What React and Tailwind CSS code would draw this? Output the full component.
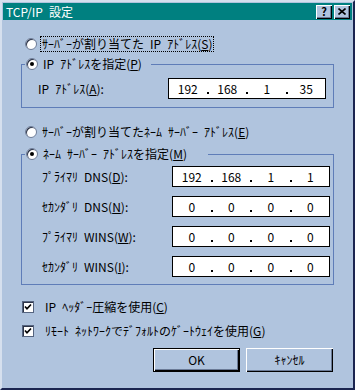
import { Fragment } from "react";

// MS UI Gothic has half-width (6px) spaces; Noto's are narrower, so use en spaces
const S = "\u2002";

function Radio({ checked }) {
  return (
    <span className="flex h-3 w-3 shrink-0 items-center justify-center rounded-full border border-[#6d7c98] bg-white shadow-[inset_1px_1px_0_#2c3448]">
      {checked && <span className="h-1 w-1 rounded-full bg-black" />}
    </span>
  );
}

function Checkbox() {
  return (
    <span className="flex h-[12px] w-[12px] shrink-0 items-center justify-center border border-[#55647f] bg-white shadow-[inset_1px_1px_0_#2c3448]">
      <svg width="8" height="8" viewBox="0 0 8 8">
        <polyline points="1,3.5 3,5.8 7,1.5" fill="none" stroke="black" strokeWidth="1.7" />
      </svg>
    </span>
  );
}

function IpField({ parts }) {
  return (
    <div className="flex h-[21px] w-[158px] items-center border border-black bg-white text-[12px] leading-none">
      {parts.map((p, i) => (
        <Fragment key={i}>
          <span className="flex-1 text-center">{p}</span>
          {i < 3 && <span className="mt-[8px] h-[2px] w-[2px] bg-black" />}
        </Fragment>
      ))}
    </div>
  );
}

function Row({ label, parts, className }) {
  return (
    <div className={"flex h-[21px] items-center " + className}>
      <span className="w-[130px] whitespace-nowrap">{label}</span>
      <IpField parts={parts} />
    </div>
  );
}

function TitleButton({ children }) {
  return (
    <span className="flex h-[14px] w-[16px] items-center justify-center bg-[#b0c4de] shadow-[inset_1px_1px_0_#fff,inset_-1px_-1px_0_#000,inset_-2px_-2px_0_#6a7a96]">
      {children}
    </span>
  );
}

export default function App() {
  return (
    <div className="flex h-[390px] w-[355px] flex-col border-t-2 border-l-2 border-r-2 border-b-2 border-t-[#d6e0ee] border-l-[#d6e0ee] border-r-[#1b2550] border-b-[#1b2550] bg-[#b0c4de] font-['Noto_Sans_CJK_JP',sans-serif] text-[12px] leading-4 text-black">
      {/* title bar */}
      <div className="mx-[1px] mt-[1px] flex h-[17px] items-center justify-between bg-[#008080] pl-[3px] pr-[2px] text-white">
        <span className="text-[12px]">TCP/IP{S}設定</span>
        <div className="flex gap-[2px]">
          <TitleButton>
            <span className="text-[11px] font-bold leading-none text-black">?</span>
          </TitleButton>
          <TitleButton>
            <svg width="8" height="7" viewBox="0 0 8 7">
              <path d="M0.5 0.5 L7.5 6.5 M7.5 0.5 L0.5 6.5" stroke="black" strokeWidth="1.6" />
            </svg>
          </TitleButton>
        </div>
      </div>

      {/* radio 1 */}
      <div className="mt-[16px] flex h-4 items-center pl-[23px]">
        <Radio />
        <span className="ml-[3px] whitespace-nowrap border border-dotted border-black px-[1px] leading-[14px]">
          ｻｰﾊﾞｰが割り当てた{S}IP{S}ｱﾄﾞﾚｽ(<u>S</u>)
        </span>
      </div>

      {/* group 1 */}
      <fieldset className="ml-[19px] mt-[4px] w-[313px] border border-[#5f7db8] pb-[8px]">
        <legend className="ml-[3px] flex h-4 w-[126px] items-center pl-[1px]">
          <Radio checked />
          <span className="ml-[5px] whitespace-nowrap">IP{S}ｱﾄﾞﾚｽを指定(<u>P</u>)</span>
        </legend>
        <Row
          className="mt-[6px] pl-[16px]"
          label={<>IP{S}ｱﾄﾞﾚｽ(<u>A</u>):</>}
          parts={["192", "168", "1", "35"]}
        />
      </fieldset>

      {/* radio 2 */}
      <div className="mt-[16px] flex h-4 items-center pl-[23px]">
        <Radio />
        <span className="ml-[5px] whitespace-nowrap">
          ｻｰﾊﾞｰが割り当てたﾈｰﾑ{S}ｻｰﾊﾞｰ{S}ｱﾄﾞﾚｽ(<u>E</u>)
        </span>
      </div>

      {/* group 2 */}
      <fieldset className="ml-[19px] mt-[6px] w-[313px] border border-[#5f7db8] pb-[7px]">
        <legend className="ml-[3px] flex h-4 w-[183px] items-center pl-[1px]">
          <Radio checked />
          <span className="ml-[5px] whitespace-nowrap">ﾈｰﾑ{S}ｻｰﾊﾞｰ{S}ｱﾄﾞﾚｽを指定(<u>M</u>)</span>
        </legend>
        <div className="mt-[4px] flex flex-col gap-[9px] pl-[20px]">
          <Row label={<>ﾌﾟﾗｲﾏﾘ{S}DNS(<u>D</u>):</>} parts={["192", "168", "1", "1"]} />
          <Row label={<>ｾｶﾝﾀﾞﾘ{S}DNS(<u>N</u>):</>} parts={["0", "0", "0", "0"]} />
          <Row label={<>ﾌﾟﾗｲﾏﾘ{S}WINS(<u>W</u>):</>} parts={["0", "0", "0", "0"]} />
          <Row label={<>ｾｶﾝﾀﾞﾘ{S}WINS(<u>I</u>):</>} parts={["0", "0", "0", "0"]} />
        </div>
      </fieldset>

      {/* checkboxes */}
      <div className="mt-[14px] flex h-4 items-center gap-[11px] pl-[20px]">
        <Checkbox />
        <span className="whitespace-nowrap">IP{S}ﾍｯﾀﾞｰ圧縮を使用(<u>C</u>)</span>
      </div>
      <div className="mt-[8px] flex h-4 items-center gap-[11px] pl-[20px]">
        <Checkbox />
        <span className="whitespace-nowrap">ﾘﾓｰﾄ{S}ﾈｯﾄﾜｰｸでﾃﾞﾌｫﾙﾄのｹﾞｰﾄｳｪｲを使用(<u>G</u>)</span>
      </div>

      {/* buttons */}
      <div className="mt-[9px] flex gap-[6px] pl-[151px]">
        <button className="h-[24px] w-[87px] border border-black bg-[#b0c4de] shadow-[inset_1px_1px_0_#fff,inset_-1px_-1px_0_#000,inset_-2px_-2px_0_#6a7a96]">
          OK
        </button>
        <button className="h-[24px] w-[87px] bg-[#b0c4de] shadow-[inset_1px_1px_0_#fff,inset_-1px_-1px_0_#000,inset_-2px_-2px_0_#6a7a96]">
          ｷｬﾝｾﾙ
        </button>
      </div>
    </div>
  );
}
